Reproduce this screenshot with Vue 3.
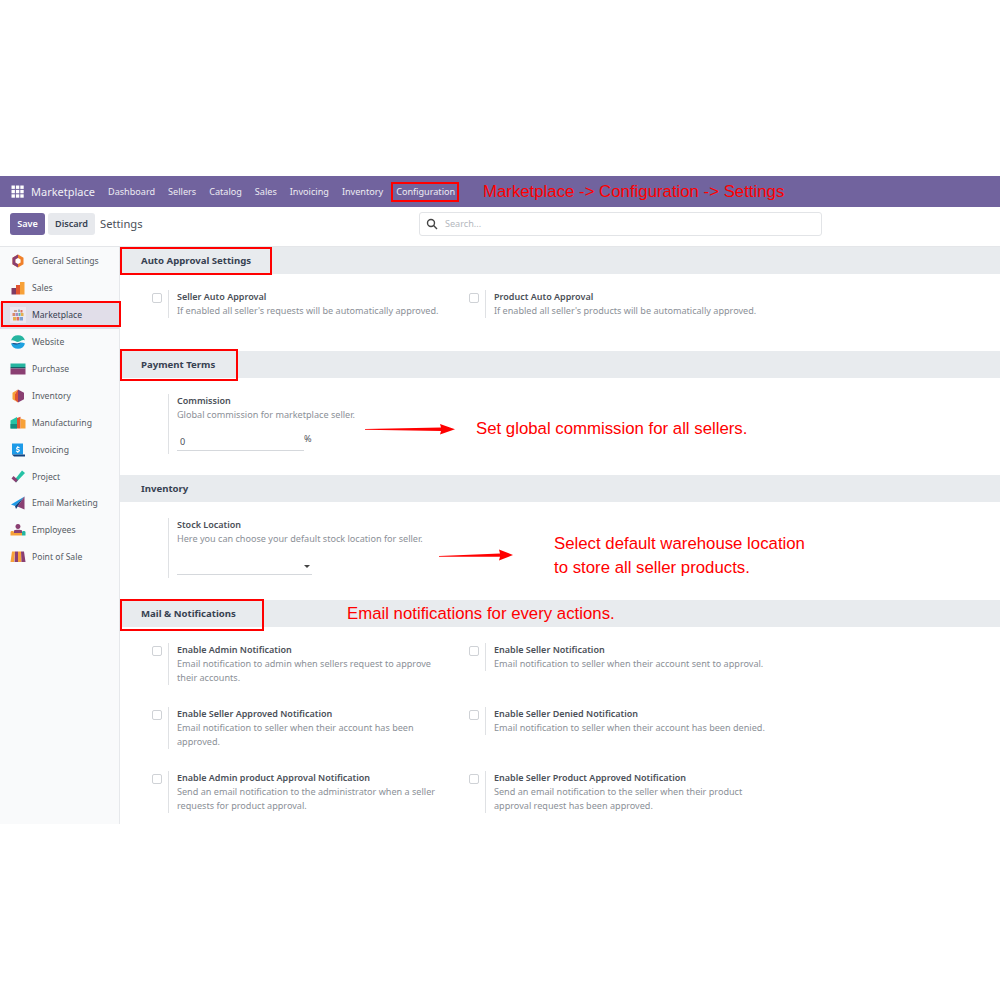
<template>
  <div class="page">
    <div class="app">
      <nav class="navbar">
        <svg class="apps" width="13" height="13" viewBox="0 0 13 13">
          <rect v-for="c in gridCells" :key="c.k" :x="c.x" :y="c.y" width="3.4" height="3.4" fill="#fff" />
        </svg>
        <span class="brand">Marketplace</span>
        <a v-for="m in menus" :key="m" class="menu">{{ m }}</a>
      </nav>

      <div class="control">
        <div class="buttons">
          <button class="btn save">Save</button>
          <button class="btn discard">Discard</button>
          <span class="crumb">Settings</span>
        </div>
        <div class="search">
          <svg width="12" height="12" viewBox="0 0 12 12" fill="none" stroke="#444" stroke-width="1.4">
            <circle cx="5" cy="5" r="3.5" />
            <path d="M7.6 7.6L11 11" />
          </svg>
          <span>Search...</span>
        </div>
      </div>

      <div class="content">
        <aside class="sidebar">
          <div v-for="app in apps" :key="app.name" class="side-item" :class="{ active: app.name === 'Marketplace' }">
            <svg class="side-icon" width="16" height="16" viewBox="0 0 16 16">
              <path v-for="(s, i) in app.shapes" :key="i" :d="s[0]" :fill="s[1]" />
            </svg>
            <span>{{ app.name }}</span>
          </div>
        </aside>

        <main class="settings">
          <h3 class="head">Auto Approval Settings</h3>
          <div class="grid auto">
            <div v-for="s in autoSettings" :key="s.title" class="setting">
              <span class="check"></span>
              <div class="box">
                <b>{{ s.title }}</b>
                <p>{{ s.text }}</p>
              </div>
            </div>
          </div>

          <h3 class="head">Payment Terms</h3>
          <div class="grid single">
            <div class="setting">
              <span class="check none"></span>
              <div class="box tall">
                <b>Commission</b>
                <p>Global commission for marketplace seller.</p>
                <div class="field-row">
                  <div class="field">0</div>
                  <span class="pct">%</span>
                </div>
              </div>
            </div>
          </div>

          <h3 class="head">Inventory</h3>
          <div class="grid single stock">
            <div class="setting">
              <span class="check none"></span>
              <div class="box tall">
                <b>Stock Location</b>
                <p>Here you can choose your default stock location for seller.</p>
                <div class="field select"><i class="caret"></i></div>
              </div>
            </div>
          </div>

          <h3 class="head">Mail &amp; Notifications</h3>
          <div class="grid mail">
            <div v-for="s in mailSettings" :key="s.title" class="setting">
              <span class="check"></span>
              <div class="box">
                <b>{{ s.title }}</b>
                <p>{{ s.text }}</p>
              </div>
            </div>
          </div>
        </main>
      </div>
    </div>

    <!-- annotations drawn on top of the screenshot -->
    <i v-for="b in redBoxes" :key="b.k" class="red-box" :style="b.style"></i>
    <span class="note" style="left:483px;top:181px">Marketplace -&gt; Configuration -&gt; Settings</span>
    <span class="note" style="left:476px;top:418px">Set global commission for all sellers.</span>
    <span class="note" style="left:554px;top:533px">Select default warehouse location</span>
    <span class="note" style="left:554px;top:557px">to store all seller products.</span>
    <span class="note" style="left:347px;top:603px">Email notifications for every actions.</span>
    <svg class="arrow" style="left:365px;top:423px" width="91" height="13" viewBox="0 0 91 13">
      <path d="M0 6L76 4.6L75 1L90 6.3L75 11.5L76 8L0 6.8Z" fill="#f00" />
    </svg>
    <svg class="arrow" style="left:439px;top:548px" width="75" height="14" viewBox="0 0 75 14">
      <path d="M0 8L61 5.5L60 1.5L74 7L60 12.5L61 8.7L0 8.8Z" fill="#f00" />
    </svg>
  </div>
</template>

<script setup>
const gridCells = [];
for (let r = 0; r < 3; r++) {
  for (let c = 0; c < 3; c++) {
    gridCells.push({ k: r + "-" + c, x: c * 4.4 + 0.5, y: r * 4.4 + 0.5 });
  }
}

const menus = ["Dashboard", "Sellers", "Catalog", "Sales", "Invoicing", "Inventory", "Configuration"];

const apps = [
  {
    name: "General Settings",
    shapes: [
      ["M8 1.5L13.5 4.7V11.3L8 14.5L2.5 11.3V4.7Z", "#f0802a"],
      ["M2.5 4.7L8 1.5V5L5.5 6.5V9.5L8 11V14.5L2.5 11.3Z", "#8a3f72"],
      ["M8 5L10.6 6.5V9.5L8 11L5.5 9.5V6.5Z", "#fff"],
    ],
  },
  {
    name: "Sales",
    shapes: [
      ["M1.5 8H6V14.5H1.5Z", "#7e3a63"],
      ["M6 5H10V14.5H6Z", "#e2552f"],
      ["M10 2H14.5V14.5H10Z", "#f7a138"],
    ],
  },
  {
    name: "Marketplace",
    shapes: [
      ["M0 0H16V16H0Z", "#ece9f1"],
      ["M4 3H7V5H4Z", "#c9a58f"],
      ["M8 2.5H10V5H8Z", "#8fb4c9"],
      ["M10.5 3H12.5V5.5H10.5Z", "#e0705f"],
      ["M2.5 6H5V9H2.5Z", "#d98a6a"],
      ["M5.5 6H8V9H5.5Z", "#a98cc0"],
      ["M8.5 6H10.5V9H8.5Z", "#5fb0a8"],
      ["M11 6H13.5V9H11Z", "#e3b04f"],
      ["M3 10H6V13.5H3Z", "#e3b04f"],
      ["M6.5 10H9V13.5H6.5Z", "#e0705f"],
      ["M9.5 10H13V13.5H9.5Z", "#7f9fd0"],
    ],
  },
  {
    name: "Website",
    shapes: [
      ["M1 6.5A7.3 7.3 0 0 1 15 6.5C12 5 10 8 8 8C5.500 8 3.500 5.500 1 6.500Z", "#26b5a0"],
      ["M1 9.500C3.500 8.500 5.500 10.500 8 9.500C10 8.500 12 8 15 9.500A7.300 7.300 0 0 1 1 9.500Z", "#1ea1e0"],
      ["M2 9.200C4 8.600 6 10 8 9.500L11 8.500C9 10.800 5 11 2 9.200Z", "#1c3f7a"],
    ],
  },
  {
    name: "Purchase",
    shapes: [
      ["M0.500 2.500H15.500V6H0.500Z", "#26b5a0"],
      ["M0.500 6H15.500V7.500H0.500Z", "#155e67"],
      ["M0.500 7.500H15.500V13.500H0.500Z", "#8a3f72"],
    ],
  },
  {
    name: "Inventory",
    shapes: [
      ["M8 1.500L14 4.800V11.200L8 14.500Z", "#8a3f72"],
      ["M8 1.500L2.500 4.800V11.200L8 14.500L5 12V6Z", "#f7a138"],
      ["M8 1.500L5 6V12L8 14.500Z", "#e2552f"],
    ],
  },
  {
    name: "Manufacturing",
    shapes: [
      ["M0.500 5.500L7 2V13.500H0.500Z", "#26c2a5"],
      ["M7 3L10.500 1.800V13.500H7Z", "#e2552f"],
      ["M10.500 3.500L15.500 5V13.500H10.500Z", "#f7a138"],
      ["M0.500 9H7V13.500H0.500Z", "#178a80"],
    ],
  },
  {
    name: "Invoicing",
    shapes: [
      ["M2 1.500H13V12.500H2Z", "#1e9be8"],
      ["M2 12.500H15V14.500H4Z", "#14427d"],
      ["M7.300 4H8.300V5C9.200 5 9.800 5.300 9.800 5.300L9.500 6.200C8.800 5.900 7.300 5.700 7.300 6.400C7.300 7 10 7 10 8.500C10 9.300 9.300 9.800 8.300 9.900V11H7.300V10C6.600 10 6 9.700 5.800 9.500L6.100 8.600C6.800 9 8.800 9.300 8.800 8.600C8.800 7.900 6.100 8 6.100 6.400C6.100 5.600 6.600 5.100 7.300 5Z", "#fff"],
    ],
  },
  {
    name: "Project",
    shapes: [
      ["M6 13.500L4.500 11L12 1.500L15 4Z", "#26c2a5"],
      ["M6 13.500L1.500 9.500L3.500 7L8 11Z", "#8a3f72"],
    ],
  },
  {
    name: "Email Marketing",
    shapes: [
      ["M14.500 1.500L1 9.500L5 11Z", "#1e9be8"],
      ["M14.500 1.500L5 11L6 14Z", "#14427d"],
      ["M14.500 1.500V14.500L7.500 11.500Z", "#8a3f72"],
    ],
  },
  {
    name: "Employees",
    shapes: [
      ["M8 2A2.500 2.500 0 1 1 7.900 2Z", "#8a3f72"],
      ["M4 8.500C4 7.500 12 7.500 12 8.500V12.500H4Z", "#8a3f72"],
      ["M0.500 10C0.500 8.500 4 8.500 4 10V13.500H0.500Z", "#f7a138"],
      ["M12 10C12 8.500 15.500 8.500 15.500 10V13.500H12Z", "#26b5a0"],
      ["M4 11H12V13.500H4Z", "#f7a138"],
    ],
  },
  {
    name: "Point of Sale",
    shapes: [
      ["M2 2.500H5L4 13H0.500Z", "#f7a138"],
      ["M5 2.500H8V13H4.500Z", "#8a3f72"],
      ["M8 2.500H11L11.500 13H8Z", "#f7a138"],
      ["M11 2.500H14L15.500 13H11.500Z", "#8a3f72"],
    ],
  },
];

const autoSettings = [
  { title: "Seller Auto Approval", text: "If enabled all seller's requests will be automatically approved." },
  { title: "Product Auto Approval", text: "If enabled all seller's products will be automatically approved." },
];

const mailSettings = [
  { title: "Enable Admin Notification", text: "Email notification to admin when sellers request to approve their accounts." },
  { title: "Enable Seller Notification", text: "Email notification to seller when their account sent to approval." },
  { title: "Enable Seller Approved Notification", text: "Email notification to seller when their account has been approved." },
  { title: "Enable Seller Denied Notification", text: "Email notification to seller when their account has been denied." },
  { title: "Enable Admin product Approval Notification", text: "Send an email notification to the administrator when a seller requests for product approval." },
  { title: "Enable Seller Product Approved Notification", text: "Send an email notification to the seller when their product approval request has been approved." },
];

function box(k, x, y, w, h) {
  return { k, style: { left: x + "px", top: y + "px", width: w + "px", height: h + "px" } };
}

const redBoxes = [
  box("config", 391, 182, 68, 20),
  box("auto", 120, 247, 152, 28),
  box("payment", 120, 349, 118, 32),
  box("mail", 120, 599, 144, 32),
  box("side", 1, 301, 120, 26),
];
</script>

<style>
body {
  background: #fff;
}
</style>

<style scoped>
.page {
  position: relative;
  height: 1000px;
  padding-top: 176px;
  box-sizing: border-box;
  font-family: "Noto Sans", sans-serif;
  font-size: 9.1px;
  line-height: 14px;
  color: #4b5058;
}

.app {
  height: 648px;
  overflow: hidden;
}

.navbar {
  display: flex;
  align-items: center;
  height: 31px;
  background: #71639e;
  color: #fff;
  padding-left: 11px;
}

.apps {
  margin-right: 7px;
}

.brand {
  font-size: 11px;
  width: 70.5px;
  opacity: 0.9;
}

.menu {
  padding: 0 6.5px;
  opacity: 0.88;
}

.control {
  display: flex;
  align-items: flex-start;
  height: 40px;
  box-sizing: border-box;
  border-bottom: 1px solid #e4e6e9;
  padding: 5px 0 0 10px;
}

.buttons {
  display: flex;
  align-items: center;
  width: 409px;
  margin-top: 1px;
}

.btn {
  height: 22px;
  border: 0;
  border-radius: 3px;
  font: 600 9.1px "Noto Sans", sans-serif;
  padding: 0 0 2px;
}

.save {
  width: 35px;
  background: #71639e;
  color: #fff;
  margin-right: 3px;
}

.discard {
  width: 47px;
  background: #e7e9ed;
  color: #374151;
  margin-right: 5px;
}

.crumb {
  font-size: 11.2px;
  color: #4b5058;
}

.search {
  display: flex;
  align-items: center;
  gap: 7px;
  width: 403px;
  height: 24px;
  box-sizing: border-box;
  border: 1px solid #e2e4e7;
  border-radius: 3px;
  padding-left: 6px;
  color: #b4b8be;
}

.content {
  display: flex;
}

.sidebar {
  width: 119px;
  height: 577px;
  flex: none;
  padding-top: 1px;
  box-sizing: content-box;
  background: #f9fafb;
  border-right: 1px solid #e6e8eb;
}

.side-item {
  display: flex;
  align-items: center;
  height: 26.9px;
  padding-left: 10px;
  font-size: 8.6px;
  color: #565b63;
}

.side-item.active {
  background: #e1dee9;
  color: #374151;
}

.side-icon {
  margin-right: 6px;
  flex: none;
}

.settings {
  flex: 1;
  min-width: 0;
}

.head {
  margin: 0;
  height: 27px;
  line-height: 27px;
  background: #e8ebee;
  padding-left: 21px;
  font-size: 9.6px;
  font-weight: 700;
  color: #374151;
}

.grid {
  display: grid;
  grid-template-columns: repeat(2, 317px);
  padding-left: 32px;
}

.auto {
  height: 77px;
  padding-top: 16px;
  box-sizing: border-box;
}

.single {
  height: 97px;
  padding-top: 16px;
  box-sizing: border-box;
}

.stock {
  height: 98px;
}

.mail {
  padding-top: 16px;
  row-gap: 22px;
}

.setting {
  display: flex;
  align-items: flex-start;
}

.check {
  width: 10px;
  height: 10px;
  margin-top: 3px;
  margin-right: 6px;
  flex: none;
  border: 1px solid #cfd2d6;
  border-radius: 2px;
  box-sizing: border-box;
  background: #fff;
}

.check.none {
  visibility: hidden;
}

.box {
  border-left: 1px solid #dfe1e4;
  padding-left: 8px;
  width: 272px;
}

.box.tall {
  height: 60px;
  width: 300px;
}

.box b {
  display: block;
  font-size: 9px;
  font-weight: 600;
  color: #4b5058;
}

.box p {
  margin: 0;
  color: #8b9097;
}

.field-row {
  display: flex;
  align-items: flex-start;
  margin-top: 10px;
}

.field {
  width: 124px;
  height: 18px;
  padding-left: 3px;
  line-height: 20px;
  border-bottom: 1px solid #d5d8dc;
}

.select {
  position: relative;
  width: 135px;
  height: 28px;
  padding: 0;
}

.caret {
  position: absolute;
  right: 2px;
  top: 19px;
  border: 3px solid transparent;
  border-top-color: #444;
  border-bottom: 0;
}

.red-box {
  position: absolute;
  box-sizing: border-box;
  border: 2px solid #f00;
}

.note {
  position: absolute;
  font-family: "Liberation Sans", sans-serif;
  font-size: 16.8px;
  line-height: 22px;
  color: #f00;
  white-space: nowrap;
}

.arrow {
  position: absolute;
}
</style>
